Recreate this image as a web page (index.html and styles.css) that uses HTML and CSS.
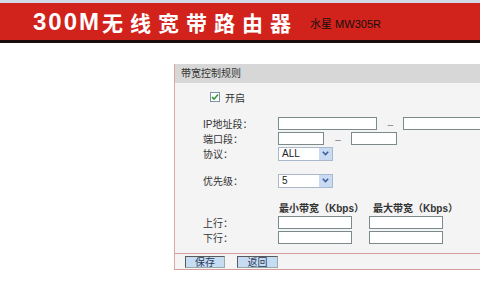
FILE: index.html
```html
<!DOCTYPE html>
<html lang="zh-CN">
<head>
  <meta charset="UTF-8">
  <title>带宽控制规则</title>
  <link rel="stylesheet" href="styles.css">
</head>
<body>

<!-- Top banner -->
<header class="banner">
  <div class="banner-red">
    <span class="brand-num">300M</span><span class="brand-cn">无线宽带路由器</span><span class="brand-model">水星 MW305R</span>
  </div>
</header>

<!-- Rule edit panel -->
<section class="panel">
  <div class="panel-title">带宽控制规则</div>

  <div class="panel-body">
    <div class="row-check">
      <span class="checkbox">
        <svg width="8" height="8" viewBox="0 0 8 8"><path d="M1 4.2 L3.1 6.2 L7 1.6" fill="none" stroke="#2f9a2f" stroke-width="1.6"/></svg>
      </span>
      <span>开启</span>
    </div>

    <div class="row row-ip">
      <span class="label">IP地址段：</span>
      <span class="field w-ip"></span>
      <span class="dash">--</span>
      <span class="field w-ip"></span>
    </div>
    <div class="row">
      <span class="label">端口段：</span>
      <span class="field w-port"></span>
      <span class="dash dash-port">--</span>
      <span class="field w-port"></span>
    </div>
    <div class="row">
      <span class="label">协议：</span>
      <div class="select"><span class="select-value">ALL</span><span class="select-arrow"><svg width="7" height="5" viewBox="0 0 7 5"><path d="M0.8 0.8 L3.5 3.6 L6.2 0.8" fill="none" stroke="#3d5e9a" stroke-width="1.5"/></svg></span></div>
    </div>

    <div class="row row-prio">
      <span class="label">优先级：</span>
      <div class="select"><span class="select-value">5</span><span class="select-arrow"><svg width="7" height="5" viewBox="0 0 7 5"><path d="M0.8 0.8 L3.5 3.6 L6.2 0.8" fill="none" stroke="#3d5e9a" stroke-width="1.5"/></svg></span></div>
    </div>

    <div class="row row-head">
      <span class="label"></span>
      <span class="bw-head">最小带宽（Kbps）</span>
      <span class="bw-head bw-head-max">最大带宽（Kbps）</span>
    </div>
    <div class="row row-up">
      <span class="label">上行：</span>
      <span class="field w-bw"></span>
      <span class="field w-bw bw-max"></span>
    </div>
    <div class="row">
      <span class="label">下行：</span>
      <span class="field w-bw"></span>
      <span class="field w-bw bw-max"></span>
    </div>
  </div>

  <div class="panel-foot">
    <button class="btn">保存</button>
    <button class="btn btn-back">返回</button>
  </div>
</section>

</body>
</html>
```

FILE: styles.css
```css
* {
  box-sizing: border-box;
}
body {
  margin: 0;
  width: 480px;
  height: 300px;
  overflow: hidden;
  background: #fff;
  font-family: "Liberation Sans", "Noto Sans CJK SC", sans-serif;
  color: #333;
}

/* Banner */
.banner {
  background: #d3d9e6;
  padding-top: 3px;
}
.banner-red {
  height: 40px;
  background: #d2221c;
  border-bottom: 3px solid #1b0c0c;
  display: flex;
  align-items: center;
  padding-left: 33px;
  color: #fff;
  white-space: nowrap;
}
.brand-num {
  font: bold 24px "Liberation Sans", sans-serif;
  letter-spacing: 2px;
}
.brand-cn {
  font: bold 21px "Noto Sans CJK SC", sans-serif;
  letter-spacing: 7px;
  margin-left: 1px;
}
.brand-model {
  font-size: 11px;
  color: #111;
  margin-left: 12px;
  padding-top: 3px;
}

/* Panel */
.panel {
  margin: 21px 0 0 174px;
  width: 330px;
  border-left: 1px solid #d8a8a8;
  background: #f4f4f4;
}
.panel-title {
  height: 19px;
  line-height: 19px;
  padding-left: 6px;
  background: #d7d7d7;
  font-size: 10px;
  color: #333;
}
.panel-body {
  height: 170px;
  padding-top: 7px;
  font-size: 10px;
}
.row-check {
  height: 14px;
  display: flex;
  align-items: center;
  padding-left: 35px;
}
.checkbox {
  width: 10px;
  height: 10px;
  border: 1px solid #7d93a3;
  background: #fff;
  display: flex;
  align-items: center;
  justify-content: center;
  margin-right: 5px;
}
.row {
  height: 15px;
  display: flex;
  align-items: center;
  padding-left: 28px;
}
.row-ip {
  margin-top: 12px;
}
.row-prio {
  margin-top: 12px;
}
.row-head {
  margin-top: 12px;
  height: 14px;
}
.row-up {
  margin-top: 1px;
}
.label {
  width: 75px;
  flex: none;
}

/* Inputs */
.field {
  height: 13px;
  border: 1px solid #7b8b8b;
  background: #fff;
  flex: none;
}
.w-ip {
  width: 99px;
}
.w-port {
  width: 46px;
}
.w-bw {
  width: 74px;
}
.bw-max {
  margin-left: 17px;
}
.dash {
  width: 26px;
  text-align: center;
  color: #888;
  font-size: 11px;
  letter-spacing: -1px;
}
.dash-port {
  width: 27px;
}
.bw-head {
  width: 91px;
  padding-left: 1px;
  font-weight: bold;
  color: #333;
}
.bw-head-max {
  padding-left: 4px;
}

/* Fake select */
.select {
  width: 55px;
  height: 14px;
  border: 1px solid #a9b8cb;
  background: #fff;
  display: flex;
  align-items: center;
}
.select-value {
  flex: 1;
  padding-left: 3px;
  font-size: 10px;
  color: #222;
}
.select-arrow {
  width: 13px;
  height: 12px;
  background: #c9daf3;
  display: flex;
  align-items: center;
  justify-content: center;
}

/* Footer */
.panel-foot {
  height: 17px;
  border-top: 1px solid #d49c9c;
  border-bottom: 1px solid #d49c9c;
  display: flex;
  align-items: center;
  gap: 12px;
  padding-left: 10px;
}
.btn {
  width: 40px;
  height: 12px;
  padding: 0;
  background: #c6dcf2;
  border: 1px solid #5a5a5a;
  border-right-color: #9aa;
  border-bottom-color: #9aa;
  font: 10px "Noto Sans CJK SC", sans-serif;
  line-height: 10px;
  color: #2a3a5a;
}
.btn-back {
  width: 41px;
}
```
